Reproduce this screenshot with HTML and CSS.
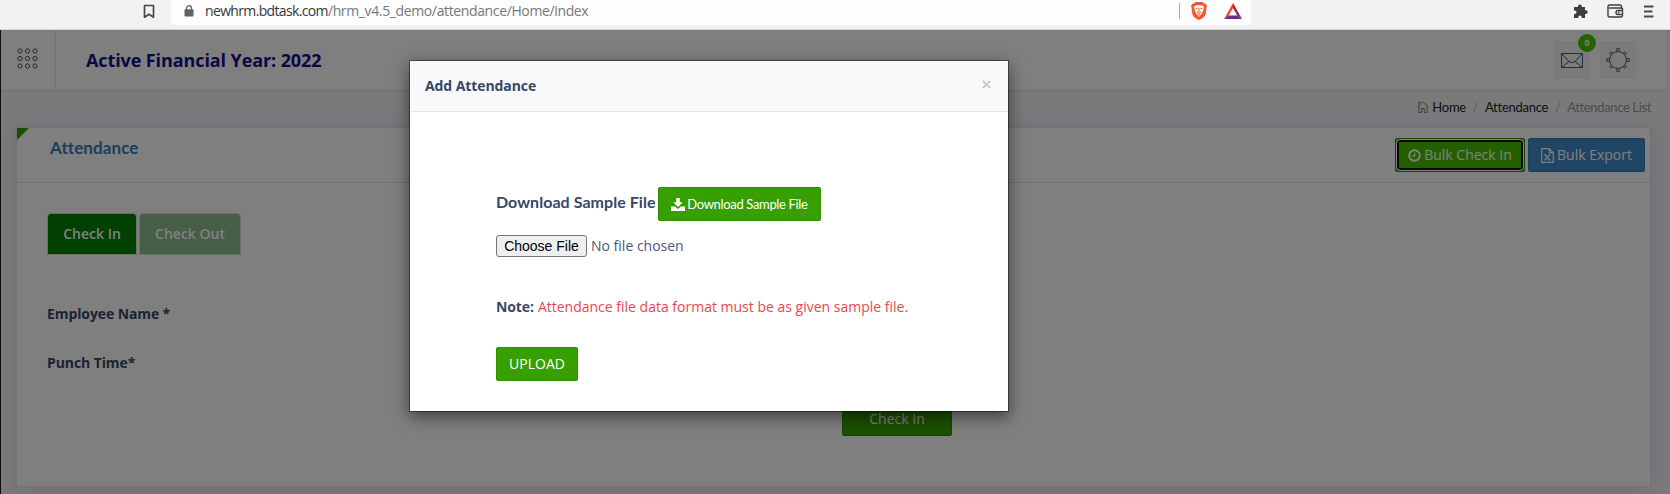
FILE: index.html
```html
<!DOCTYPE html>
<html lang="en">
<head>
<meta charset="utf-8">
<title>Attendance</title>
<link rel="stylesheet" href="styles.css">
</head>
<body>
<div class="browser">
  <svg class="bookmark" width="12" height="15" viewBox="0 0 12 15"><path d="M1.500 1.500h9v11.700L6 10.200l-4.500 3z" fill="none" stroke="#45484c" stroke-width="1.700" stroke-linejoin="round"/></svg>
  <div class="address">
    <svg class="lock" width="10" height="12" viewBox="0 0 10 12"><path d="M2.500 5V3.200a2.500 2.500 0 0 1 5 0V5" fill="none" stroke="#5f6368" stroke-width="1.300"/><rect x=".5" y="4.300" width="9" height="7.200" rx="1" fill="#5f6368"/></svg>
    <span class="url">newhrm.bdtask.com<span class="path">/hrm_v4.5_demo/attendance/Home/index</span></span>
    <span class="split"></span>
    <svg class="brave" width="16" height="18" viewBox="0 0 16 18"><path d="M4.500 0h7l1.300 1.500 1.700-.1L16 4l-.5 1.500L15 10c-.4 3.500-1.500 4.700-4 6.500L8 18l-3-1.500C2.500 14.700 1.400 13.500 1 10L.5 5.500 0 4l1.500-2.600 1.700.1z" fill="#fb542b"/><path d="M3 4.500 5.500 3.300h5L13 4.500l-1 4.700-1.700 3L8 15l-2.300-2.800L4 9.200z" fill="#fff"/><path d="M4.500 6.300l2.300.7M11.500 6.300 9.200 7M8 6v4.500M5.700 9.800 8 11.600l2.300-1.800M6.500 13h3" fill="none" stroke="#fb542b" stroke-width="1"/></svg>
    <svg class="bat" width="18" height="16" viewBox="0 0 18 16"><path d="M9 0v5L4.700 12.500 0 16z" fill="#ff4724"/><path d="M9 0l9 16-4.700-3.500L9 5z" fill="#9e1f63"/><path d="M0 16l4.700-3.500h8.600L18 16z" fill="#662d91"/></svg>
  </div>
  <div class="tools">
    <svg width="15" height="15" viewBox="0 0 15 15"><path d="M5 2.300a1.900 1.900 0 0 1 3.800 0V3H12v3.200h.8a1.900 1.900 0 0 1 0 3.800H12v4H8.700v-.9a1.700 1.700 0 0 0-3.400 0v.9H1v-4h.8a1.700 1.700 0 0 0 0-3.400H1V3h4z" fill="#3b3e42"/></svg>
    <svg width="17" height="14" viewBox="0 0 17 14"><path d="M14.500 4V2.500A1.500 1.500 0 0 0 13 1H2.500A1.500 1.500 0 0 0 1 2.500v9A1.500 1.500 0 0 0 2.500 13h11.500a1.500 1.500 0 0 0 1.500-1.500V5A1 1 0 0 0 14.500 4H2M15.500 6.500H11a2 2 0 0 0 0 4h4.500M11 8.500h1.500" fill="none" stroke="#3b3e42" stroke-width="1.400"/></svg>
    <svg width="11" height="13" viewBox="0 0 11 13"><path d="M1 1.500h9.500M1 6.500h8.500M1 11.500h9.500" stroke="#4a4c50" stroke-width="1.900"/></svg>
  </div>
</div>

<div class="app">
  <header class="top">
    <div class="menu"><svg width="21" height="21" viewBox="0 0 21 21" fill="none" stroke="#4c525f" stroke-width="1"><circle cx="3" cy="3" r="2.100"/><circle cx="10.500" cy="3" r="2.100"/><circle cx="18" cy="3" r="2.100"/><circle cx="3" cy="10.500" r="2.100"/><circle cx="10.500" cy="10.500" r="2.100"/><circle cx="18" cy="10.500" r="2.100"/><circle cx="3" cy="18" r="2.100"/><circle cx="10.500" cy="18" r="2.100"/><circle cx="18" cy="18" r="2.100"/></svg></div>
    <div class="year">Active Financial Year: 2022</div>
    <div class="actions">
      <div class="square"><svg width="22" height="15" viewBox="0 0 22 15" fill="none" stroke="#4a5877" stroke-width="1"><path d="M.5.5h21v14H.5zM.5.5l7.500 8q3 2.500 6 0l7.500-8M.5 14.500 8 8.500M21.500 14.500 14 8.500"/></svg><span class="badge">0</span></div>
      <div class="square"><svg width="24" height="24" viewBox="0 0 24 24" fill="none" stroke="#4a5877" stroke-width="1"><circle cx="12" cy="12" r="8.400"/><path d="M10.700 3.600V.7h2.600v2.900M10.700 20.400v2.900h2.600v-2.900M3.600 10.700H.7v2.600h2.900M20.400 10.700h2.900v2.600h-2.900"/><path d="M5.200 7 3.800 5.200l1.400-1.400L7 5.200M17 5.200l1.800-1.400 1.400 1.400L18.800 7M18.800 17l1.400 1.800-1.400 1.400-1.800-1.400M7 18.800l-1.800 1.400-1.400-1.400L5.200 17"/></svg></div>
    </div>
  </header>
  <nav class="crumbs">
    <svg width="12" height="12" viewBox="0 0 12 12" fill="none" stroke="#666" stroke-width=".8"><path d="M.5 6 6 .8 11.500 6M2 5v6.500h2.700V7.500h2.600v4H10V5M2 3.500V1h1.500"/></svg>
    <span class="c1">Home</span><i>/</i><span class="c2">Attendance</span><i>/</i><span class="c3">Attendance List</span>
  </nav>
  <main class="card">
    <div class="head">
      <h2>Attendance</h2>
      <div class="bulk">
        <button class="btn green focus"><svg width="13" height="13" viewBox="0 0 13 13" fill="none" stroke="#fff"><circle cx="6.500" cy="6.500" r="5.300" stroke-width="1.900"/><path d="M6.800 3.500v3.300H4" stroke-width="1.200"/></svg><span>Bulk Check In</span></button>
        <button class="btn blue"><svg width="13" height="15" viewBox="0 0 13 15" fill="none" stroke="#fff" stroke-width="1.200"><path d="M.7.7h7.600l4 4v9.600H.7zM8.300.7v4h4M4 6.800l4.500 5.200M8.500 6.800 4 12M3.200 6.800h2M7.500 6.800h2M3.200 12h2M7.500 12h2"/></svg><span>Bulk Export</span></button>
      </div>
    </div>
    <div class="tabs"><span class="tab on">Check In</span><span class="tab off">Check Out</span></div>
    <div class="label l1">Employee Name *</div>
    <div class="label l2">Punch Time*</div>
    <button class="btn green submit">Check In</button>
  </main>
</div>
<div class="backdrop"></div>
<section class="modal">
  <div class="mhead"><span class="mtitle">Add Attendance</span><svg width="9" height="9" viewBox="0 0 9 9"><path d="M.8.8l7.400 7.400M8.200.8.8 8.200" stroke="#c5c7c9" stroke-width="1.900"/></svg></div>
  <div class="mbody">
    <div class="sample"><span class="stitle">Download Sample File</span><button class="btn green dl"><svg width="14" height="13" viewBox="0 0 14 13"><path d="M5.200 0h3.600v4.200h2.900L7 8.900 2.300 4.200h2.900zM0 8.500h4L7 11l3-2.500h4V13H0z" fill="#fff"/></svg><span>Download Sample File</span></button></div>
    <div class="file"><span class="choose">Choose File</span><span class="none">No file chosen</span></div>
    <div class="note"><b>Note:</b><span>Attendance file data format must be as given sample file.</span></div>
    <button class="btn green upload">UPLOAD</button>
  </div>
</section>
</body>
</html>
```
FILE: styles.css
```css
* { box-sizing: border-box; }
body { margin: 0; width: 1670px; height: 494px; overflow: hidden; font-family: "Open Sans", sans-serif; font-size: 14px; color: #374767; }
svg { display: block; flex: none; }
span, i, b, h2, .label, .year { white-space: nowrap; }
.browser { height: 30px; background: #f2f2f2; border-bottom: 1px solid #d2d3d4; display: flex; align-items: flex-start; }
.bookmark { margin: 4px 0 0 143px; }
.address { margin-left: 16px; width: 1080px; height: 25px; background: #fdfdfd; border-radius: 0 0 4px 4px; display: flex; align-items: center; padding: 0 9px 3px 13px; }
.lock { margin-right: 11px; }
.url { font-size: 14px; line-height: 20px; color: #35373a; letter-spacing: -.65px; }
.path { color: #75787c; letter-spacing: -.37px; }
.split { width: 1px; height: 16px; background: #aaaaba; margin-left: auto; }
.brave { margin: 0 17px 0 11px; }
.tools { margin: 3px 16px 0 auto; height: 16px; display: flex; align-items: center; gap: 19px; }
.app { height: 464px; background: #f4f4f5; border-left: 1px solid #1c1c1e; overflow: hidden; }
.top { width: 1665px; height: 61px; background: #fff; border-bottom: 1px solid #e1e5ed; display: flex; }
.menu { width: 55px; border-right: 1px solid #e1e5ed; padding: 18px 0 0 16px; }
.year { margin: 17px 0 0 30px; font-size: 18px; line-height: 26px; font-weight: 700; color: #10108a; letter-spacing: -.1px; }
.actions { margin: 12px 30px 0 auto; display: flex; gap: 10px; }
.square { width: 36px; height: 36px; background: #f7f7f7; border: 1px solid #f0f0f0; display: flex; align-items: center; justify-content: center; position: relative; }
.badge { position: absolute; left: 23px; top: -9px; width: 18px; height: 18px; border-radius: 50%; background: #46c608; color: #fff; font-size: 9px; line-height: 18px; font-weight: 700; text-align: center; }
.crumbs { height: 36px; display: flex; align-items: center; justify-content: flex-end; padding: 0 19px 4px 0; font-family: Lato, sans-serif; font-size: 13px; color: #222; letter-spacing: -.25px; }
.crumbs svg { margin-right: 3px; }
.crumbs i { font-style: normal; width: 19px; text-align: center; color: #bbb; }
.c3 { color: #999; letter-spacing: -.36px; }
.card { width: 1635px; height: 360px; margin-left: 15px; background: #fff; border: 1px solid #e1e6ef; box-shadow: 0 1px 15px 1px rgba(113,106,202,.15); position: relative; }
.card::before { content: ""; position: absolute; left: 0; top: 0; border-top: 12px solid #37a000; border-right: 12px solid transparent; }
.head { height: 55px; border-bottom: 1px solid #e4e5e7; display: flex; justify-content: space-between; padding: 10px 5px 0 33px; }
h2 { margin: 0; font: 700 17px/20px Lato, sans-serif; letter-spacing: .1px; color: #3a7cb5; }
.bulk { display: flex; gap: 3px; }
.btn { height: 34px; border: 1px solid #318d01; border-radius: 2px; background: #37a000; color: #fff; font: 14px/20px "Open Sans", sans-serif; padding: 0; display: flex; align-items: center; justify-content: center; gap: 3px; }
.bulk .btn { width: 117px; }
.bulk .focus { width: 130px; background: #46c300; position: relative; }
.focus::after { content: ""; position: absolute; inset: 1px; border: 2px solid #101010; outline: 1px solid #fff; border-radius: 3px; }
.bulk .blue { background: #428bca; border-color: #357ebd; }
.tabs { margin: 30px 0 0 30px; display: flex; gap: 2px; font-weight: 600; color: #fff; }
.tab { width: 90px; height: 42px; line-height: 40px; text-align: center; border: 1px solid #ddd; border-radius: 4px 4px 0 0; background: #008000; }
.off { width: 102px; background: #8fbc8f; }
.label { margin-left: 30px; font-weight: 700; line-height: 20px; height: 20px; letter-spacing: -.1px; }
.l1 { margin-top: 49px; }
.l2 { margin-top: 29px; }
.submit { width: 110px; margin: 29px 0 0 825px; }
.backdrop { position: absolute; left: 0; top: 30px; width: 1670px; height: 464px; background: rgba(0,0,0,.5); }
.modal { position: absolute; left: 409px; top: 60px; width: 600px; height: 352px; background: #fff; border: 1px solid rgba(0,0,0,.4); background-clip: padding-box; box-shadow: 0 5px 15px rgba(0,0,0,.5); }
.mhead { height: 51px; background: #f7f9fa; border-bottom: 1px solid #e1e6ef; display: flex; justify-content: space-between; padding: 15px 17px 0 15px; }
.mhead svg { margin-top: 4px; }
.mtitle { font-weight: 700; line-height: 20px; letter-spacing: -.08px; }
.mbody { padding: 75px 0 0 86px; }
.sample { display: flex; height: 34px; }
.stitle { width: 162px; font: 700 16px/30px Lato, sans-serif; letter-spacing: .05px; }
.dl { width: 163px; font-family: Lato, sans-serif; font-size: 13px; letter-spacing: -.34px; gap: 2px; }
.dl span { margin-top: -1px; }
.file { margin-top: 14px; display: flex; gap: 4px; line-height: 22px; }
.choose { width: 91px; height: 22px; border: 1px solid #767676; border-radius: 3px; background: #efefef; color: #000; text-align: center; font: 14px/20px "Liberation Sans", sans-serif; }
.none { color: #4b5878; }
.note { margin: 40px 0 0; display: flex; gap: 4px; line-height: 20px; }
.note b { font-weight: 700; letter-spacing: -.1px; }
.note span { color: #ea4650; }
.upload { width: 82px; margin-top: 30px; }
```
